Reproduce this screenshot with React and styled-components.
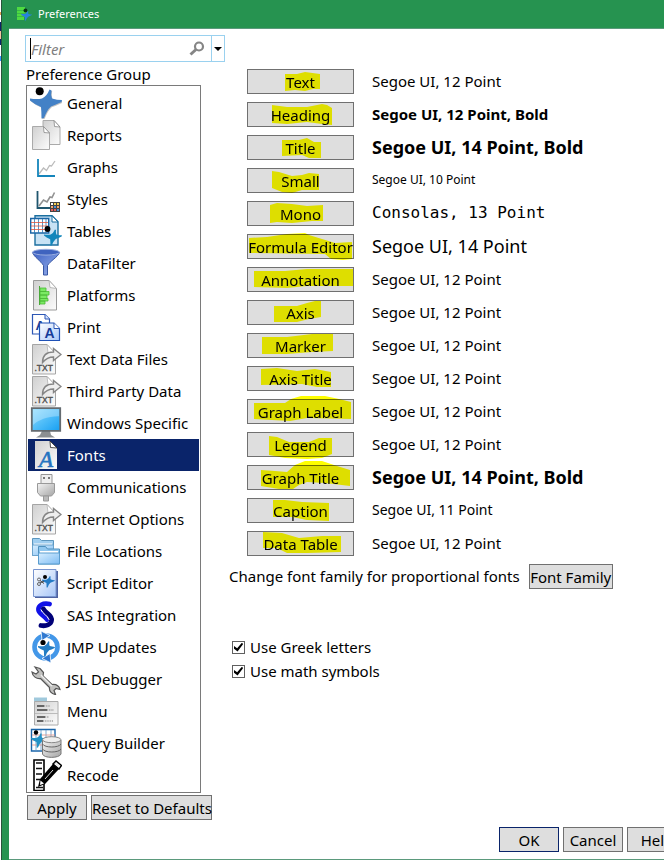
import React, { useState } from "react";
import styled, { createGlobalStyle } from "styled-components";

const TxtIcon = () => (
  <>
    <path d="M2.500 1.500H17l8.500 9V31h-23z" fill="url(#paper)" stroke="#a5a5a5" />
    <path d="M17 1.500l1 8 7.500 1z" fill="#fff" stroke="#aaa" strokeWidth=".7" />
    <path
      d="M12.500 19.500c0-7 4-10.500 11-10.500V5.500l7.500 6-7.500 6V14c-5 0-8 2-11 5.500z"
      fill="#eee"
      stroke="#858585"
      strokeWidth="1.400"
    />
    <text x="4.500" y="28" fontSize="8.500" fontFamily="Liberation Sans, sans-serif" fill="#555" stroke="#555" strokeWidth=".4">
      .TXT
    </text>
  </>
);

const MAN =
  "M0 11.500Q7 12.500 12 11.500Q17 9 19.500 2.500L21.500 3.500Q20.500 8 22 11.500Q27 13 32 13L31.500 15Q25 18 21 19.500Q17 23 14 31L11.500 31.500Q11.500 25 11 20Q4 17 0 13.500z";

const icons = {
  general: (
    <>
      <path d={MAN} transform="translate(.7 .8)" fill="#999" opacity=".6" />
      <path d={MAN} fill="#4381c6" />
      <circle cx="9.700" cy="4.200" r="4" fill="#000" />
    </>
  ),
  reports: (
    <>
      <path d="M13 1.500h11l6 6.500v17.500H13z" fill="url(#paper)" stroke="#aaa" />
      <path d="M24 1.500l.5 6 5.500.5z" fill="#fff" stroke="#888" strokeWidth=".8" />
      <path d="M2.500 7.500h11l6 6.500v16.500h-17z" fill="url(#paper)" stroke="#aaa" />
      <path d="M13.500 7.500l.5 6 5.500.5z" fill="#fff" stroke="#888" strokeWidth=".8" />
    </>
  ),
  graphs: (
    <>
      <path d="M9 23l4.500-6 3 2.500 3-5 2 .5 3.500-5" fill="none" stroke="#bbb" strokeWidth="1.300" />
      <path d="M8 8v17h17" fill="none" stroke="#1585bb" strokeWidth="1.800" />
    </>
  ),
  styles: (
    <>
      <path d="M9 23l4.500-6 3.500 2 3-5 2 .5 2.500-5" fill="none" stroke="#929292" strokeWidth="1.600" />
      <path d="M7.500 8v17H20" fill="none" stroke="#20566e" strokeWidth="1.800" />
      <path d="M20 19h10v10H20z" fill="#444" />
      <path d="M21 20h2v2h-2z" fill="#fff" />
      <path d="M24 20h2v2h-2zM27 20h2v2h-2z" fill="#f5cf54" />
      <path d="M21 23h2v2h-2zM27 23h2v2h-2z" fill="#f6a56d" />
      <path d="M24 23h2v2h-2zM27 26h2v2h-2z" fill="#4f94d8" />
      <path d="M21 26h2v2h-2zM24 26h2v2h-2z" fill="#e25c5c" />
    </>
  ),
  tables: (
    <>
      <path d="M5 .8h17l6 6V30H5z" fill="#c8e2f4" stroke="#1b6f9f" strokeWidth="1.400" />
      <path d="M22 .8V7h6z" fill="#fff" stroke="#1b6f9f" />
      <path d="M.7 3.500h18V18H.7z" fill="#fff" stroke="#1a65a5" strokeWidth="1.400" />
      <path d="M4.500 4v14M8.500 4v14M12.500 4v14M16 4v14" stroke="#2b78b5" strokeWidth=".8" />
      <path d="M1 7.500h17M1 11h17M1 14.500h17" stroke="#e0533b" strokeWidth=".8" />
      <path d={MAN} transform="translate(14 13) scale(.56)" fill="#1286bb" />
      <circle cx="17.500" cy="14" r="2.900" fill="#000" />
    </>
  ),
  filter: (
    <>
      <path d="M2.500 5.500C4 10 11 14 13.500 18.500V28h4v-9.500C20 14 28 10 29.500 5.500z" fill="url(#funnel)" stroke="#3857a4" />
      <ellipse cx="16" cy="5.200" rx="13.500" ry="2.900" fill="#3f63bf" stroke="#9aaedf" />
    </>
  ),
  platforms: (
    <>
      <path d="M3.500 1.500H19l7.500 8V31h-23z" fill="url(#paper)" stroke="#9a9a9a" />
      <path d="M19 1.500l1 7 6.500 1z" fill="#fff" stroke="#aaa" strokeWidth=".8" />
      <path d="M10 9h6v3.500h-6zM10 12.500h9V16h-9zM10 16h7v3.500h-7zM10 19.500h8V22h-8zM10 22h5v3h-5z" fill="#7bea64" stroke="#4cba38" strokeWidth=".8" />
      <path d="M9.500 7v19" stroke="#4aa93a" />
    </>
  ),
  print: (
    <>
      <path d="M2.500 3.500h12.500l4.500 4.500v15h-17z" fill="#fff" stroke="#2d57b5" strokeWidth="1.200" />
      <path d="M15 3.500V8h4.500" fill="#d6e4ff" stroke="#2d57b5" />
      <text x="5.500" y="19" fontSize="13" fontWeight="bold" fontFamily="Liberation Sans, sans-serif" fill="#1c3f93">A</text>
      <path d="M9.500 12H24l5.500 5.500v12h-20z" fill="url(#bluePaper)" stroke="#1f51b6" strokeWidth="1.200" />
      <path d="M24 12v5.500h5.500" fill="#fff" stroke="#2d57b5" />
      <text x="14.500" y="27" fontSize="14" fontWeight="bold" fontFamily="Liberation Sans, sans-serif" fill="#153b98">A</text>
    </>
  ),
  txt: <TxtIcon />,
  monitor: (
    <>
      <path d="M12 24h8l1 4 4 2.500H6l4-2.500z" fill="#8b8f92" />
      <path d="M1.800 1.200h28.400v22.600H1.800z" fill="url(#screen)" stroke="#646b70" strokeWidth="1.800" />
      <path d="M3 2.200h26v7C18 9 8 13 3 18z" fill="#fff" opacity=".3" />
    </>
  ),
  fonts: (
    <>
      <path d="M5 2h15l7 7v21H5z" fill="url(#paper)" />
      <path d="M20 2l.5 6.500L27 9z" fill="#fff" stroke="#222" strokeWidth=".8" />
      <text x="9" y="27.500" fontSize="23" fontStyle="italic" fontFamily="Liberation Serif, serif" fill="#2573c0" stroke="#2573c0" strokeWidth=".6">A</text>
    </>
  ),
  plug: (
    <>
      <path d="M11 3.500h11V13H11z" fill="#eee" stroke="#969696" />
      <path d="M13 6h2v2h-2zM18 6h2v2h-2z" fill="#777" />
      <path d="M7.500 12.500h17v9l-3 3.500h-11l-3-3.500z" fill="url(#metal)" stroke="#999" />
      <path d="M13.500 25h5v5h-5z" fill="#bbb" stroke="#999" />
    </>
  ),
  folders: (
    <>
      <path d="M2.500 3.500h7l2 2h12v15h-21z" fill="#9fcef0" stroke="#5c96be" />
      <path d="M4 8.500h18V11H4z" fill="#fff" />
      <path d="M2.500 10h21v10.500h-21z" fill="url(#folder)" stroke="#6ba3cc" />
      <path d="M8.500 11.500h7l2 2.500h12v15h-21z" fill="#90c7ef" stroke="#4f91be" />
      <path d="M10 16h18v2H10z" fill="#fff" />
      <path d="M8.500 18h21v11h-21z" fill="url(#folder)" stroke="#5b9dce" />
    </>
  ),
  script: (
    <>
      <path d="M26 4h2v27H5v-1h21z" fill="#4f63a1" />
      <path d="M3.500 2.500H26v27H3.500z" fill="url(#bluePaper)" stroke="#7895cf" />
      <path d={MAN} transform="translate(12 8) scale(.4)" fill="#247bc5" />
      <circle cx="15" cy="10" r="2" />
      <circle cx="9" cy="12.500" r="1.500" fill="none" stroke="#666" />
      <circle cx="9" cy="17" r="1.500" fill="none" stroke="#666" />
      <path d="M10 13.500l4 3M10 16l4-2" stroke="#444" />
    </>
  ),
  sas: (
    <g fill="none" strokeLinecap="round" strokeWidth="4.800">
      <path d="M19.500 5C13 3.500 8 6.500 8.500 11C9 15 14 16 17 20.500" stroke="#1111e8" />
      <path d="M13.500 10C16 15 22.500 16 21.500 21.500C21 25.500 16 27.500 11 26.500" stroke="#000078" />
      <path d="M11 11C12.500 14.500 17 16 19 20.500" stroke="#fff" strokeWidth="1" />
    </g>
  ),
  updates: (
    <>
      <circle cx="16" cy="16" r="11.500" fill="#fff" stroke="#4397e8" strokeWidth="4.600" />
      <path d="M11 0l9 4.500-8 5zM21 32l-9-4.500 8-5z" fill="#3079d0" stroke="#fff" strokeWidth=".8" />
      <path d={MAN} transform="translate(8 9) scale(.53)" fill="#237cc3" />
      <circle cx="13" cy="11.500" r="2.600" />
    </>
  ),
  wrench: (
    <>
      <path
        d="M5 4l5 1.500 3.500 4-.5 3.500 9 8.500c4-.5 7 1.500 8 5l-4-1-2 2 1.500 4c-4-.5-6.500-3.500-6-7l-9-9c-4 .5-8-2-8.500-6.500l4 2 2.500-2z"
        fill="#c2c2c0"
        stroke="#555"
        strokeWidth="1.200"
      />
      <path d="M11 12l11 11" stroke="#eee" strokeWidth="1.500" />
    </>
  ),
  menu: (
    <>
      <path d="M4 2.500h13V7H4z" fill="#a0c9dc" />
      <path d="M4.500 6.500h23.500V30H4.500z" fill="url(#paper)" stroke="#aaa" />
      <path d="M5 18.500h23" stroke="#bbb" />
      <path d="M7 11h7M7 15h10M7 22h8M7 26h6" stroke="#666" strokeWidth="1.800" />
      <path d="M14 11h6M17 15h7M15 22h4M13 26h11" stroke="#777" strokeWidth="1.200" strokeDasharray="1.200 1" />
    </>
  ),
  query: (
    <>
      <path d="M1.500 2.500H25V24H1.500z" fill="#fff" stroke="#1a65aa" strokeWidth="1.400" />
      <path d="M6 3v21M11 3v21M16 3v21M21 3v21" stroke="#5a94c6" strokeWidth=".8" />
      <path d="M2 8h23M2 13h23M2 18h23" stroke="#e19183" strokeWidth=".8" />
      <path d={MAN} transform="translate(1 5) scale(.5)" fill="#2292c6" />
      <circle cx="6" cy="5.500" r="2.200" />
      <path d="M12.500 13v14c1 4.500 17 4.500 18.500 0V13z" fill="url(#metal)" stroke="#777" />
      <path d="M12.500 17c2 4 16.500 4 18.500 0M12.500 22c2 4 16.500 4 18.500 0" fill="none" stroke="#666" />
      <ellipse cx="21.700" cy="12.700" rx="9.200" ry="3" fill="#eee" stroke="#888" />
    </>
  ),
  recode: (
    <>
      <path d="M4 1h10v30.500H4z" fill="#fff" stroke="#000" strokeWidth="1.600" />
      <path d="M6 4h6M6 9.500h6M6 15h6M6 20.500h4M6 28.500h7" stroke="#111" strokeWidth="1.500" />
      <path d="M8 28l2-8L23 5l6 5-14 15z" fill="#000" />
      <path d="M23 5l3-3 5.500 4.500L29 10z" fill="#fff" stroke="#000" strokeWidth="1.500" />
      <path d="M10.500 21.500l3.500 3-4 1.500z" fill="#fff" />
      <path d="M25 4l5 4M15 20l8-9" stroke="#ddd" strokeWidth="1" />
    </>
  ),
};

const groups = [
  ["General", "general"],
  ["Reports", "reports"],
  ["Graphs", "graphs"],
  ["Styles", "styles"],
  ["Tables", "tables"],
  ["DataFilter", "filter"],
  ["Platforms", "platforms"],
  ["Print", "print"],
  ["Text Data Files", "txt"],
  ["Third Party Data", "txt"],
  ["Windows Specific", "monitor"],
  ["Fonts", "fonts"],
  ["Communications", "plug"],
  ["Internet Options", "txt"],
  ["File Locations", "folders"],
  ["Script Editor", "script"],
  ["SAS Integration", "sas"],
  ["JMP Updates", "updates"],
  ["JSL Debugger", "wrench"],
  ["Menu", "menu"],
  ["Query Builder", "query"],
  ["Recode", "recode"],
];

// mark: marker-pen stroke over the button, in the button's own pixels
const fonts = [
  { name: "Text", value: "Segoe UI, 12 Point", mark: "M38 5L50 5 58 3 73 5V20H66L58 22 48 21 38 22z" },
  { name: "Heading", value: "Segoe UI, 12 Point, Bold", bold: true, mark: "M25 3L40 5 60 5 75 2 80 3 85 6V23L75 22 60 20 40 22 25 21z" },
  { name: "Title", value: "Segoe UI, 14 Point, Bold", size: 18, bold: true, mark: "M35 5L52 5 60 3 67 7 74 7V23H62L55 20 35 21z" },
  { name: "Small", value: "Segoe UI, 10 Point", size: 12, mark: "M25 3L32 4 45 8 55 7 62 5 72 6V22H55L45 25 35 24 25 20z" },
  { name: "Mono", value: "Consolas, 13 Point", size: 16, mono: true, mark: "M23 4L30 2 45 3 60 5 76 4V20L65 20 45 22 30 21 23 22z" },
  { name: "Formula Editor", value: "Segoe UI, 14 Point", size: 18, mark: "M2 4L20 3 40 0 58 -1 62 1 75 5 88 9 105 8V25L96 26 84 25 78 20 2 19z" },
  { name: "Annotation", value: "Segoe UI, 12 Point", mark: "M7 4L38 4 60 2H106V19L60 19 40 21 7 20z" },
  { name: "Axis", value: "Segoe UI, 12 Point", mark: "M27 6L50 6 60 3 68 1H74V17L62 19 50 22H27z" },
  { name: "Marker", value: "Segoe UI, 12 Point", mark: "M15 4L40 4 65 1H86V18L65 19 40 21H15z" },
  { name: "Axis Title", value: "Segoe UI, 12 Point", mark: "M14 3L30 2 50 5 68 3 84 6V21H70L55 18 14 19z" },
  { name: "Graph Label", value: "Segoe UI, 12 Point", mark: "M7 4L38 4 44 0 54 -3 78 -3 92 0 104 3V20L60 19 43 22 7 20z" },
  { name: "Legend", value: "Segoe UI, 12 Point", mark: "M22 4L30 5 42 10 62 10 72 6H85V22L75 26 60 27 38 26 22 23z" },
  { name: "Graph Title", value: "Segoe UI, 14 Point, Bold", size: 18, bold: true, mark: "M14 5L28 6 40 7 48 0 58 -4 75 -4 90 1 103 5V21L78 18 60 17 52 20 46 24 32 24 14 21z" },
  { name: "Caption", value: "Segoe UI, 11 Point", size: 14, mark: "M26 2L38 2 55 4 82 5V23L60 22 45 19H26z" },
  { name: "Data Table", value: "Segoe UI, 12 Point", mark: "M16 1L35 2 52 7 75 5H94V21L60 22 40 22 30 17 16 17z" },
];

const Gradient = ({ id, from, to }) => (
  <linearGradient id={id} x1="0" y1="0" x2="1" y2="1">
    <stop offset="0" stopColor={from} />
    <stop offset="1" stopColor={to} />
  </linearGradient>
);

const App = () => {
  const [selected, setSelected] = useState("Fonts");

  return (
    <Desktop>
      <GlobalStyle />
      <Defs aria-hidden="true">
        <defs>
          <Gradient id="paper" from="#d0d0d0" to="#fcfcfc" />
          <Gradient id="bluePaper" from="#ffffff" to="#a7c6f7" />
          <Gradient id="funnel" from="#3c60c3" to="#9db6ef" />
          <Gradient id="screen" from="#8bdcff" to="#169ff2" />
          <Gradient id="metal" from="#f4f4f4" to="#a5a5a5" />
          <Gradient id="folder" from="#d9efff" to="#7dbcf3" />
        </defs>
      </Defs>
      <Window>
        <TitleBar>
          <svg width="16" height="16" viewBox="0 0 16 16" aria-hidden="true">
            <path d="M1 1h8v3H1zM1 4.500h11v3H1zM1 8h8v2.500H1zM1 11h7v3H1z" fill="#4edb41" />
            <path d={MAN} transform="translate(5 4) scale(.34)" fill="#2684dc" />
            <circle cx="9.500" cy="4.500" r="2" fill="#073416" />
          </svg>
          <WindowTitle>Preferences</WindowTitle>
        </TitleBar>
        <Dialog>
          <Columns>
            <Sidebar>
              <FilterBox>
                <Caret />
                <FilterInput placeholder="Filter" aria-label="Filter" />
                <svg width="16" height="16" viewBox="0 0 16 16" aria-hidden="true">
                  <circle cx="10" cy="5.500" r="4" fill="none" stroke="#858585" strokeWidth="2.200" />
                  <path d="M7 8.500l-5.500 5" stroke="#858585" strokeWidth="3" />
                </svg>
                <FilterMenu aria-label="Filter options">
                  <svg width="8" height="4" viewBox="0 0 8 4" aria-hidden="true">
                    <path d="M0 0h8L4 4z" />
                  </svg>
                </FilterMenu>
              </FilterBox>
              <GroupLabel>Preference Group</GroupLabel>
              <GroupList>
                {groups.map(([name, icon]) => (
                  <li key={name}>
                    <GroupItem $active={selected === name} onClick={() => setSelected(name)}>
                      <svg width="32" height="32" viewBox="0 0 32 32" aria-hidden="true">
                        {icons[icon]}
                      </svg>
                      {name}
                    </GroupItem>
                  </li>
                ))}
              </GroupList>
              <SidebarButtons>
                <Button $width={60}>Apply</Button>
                <Button $width={121}>Reset to Defaults</Button>
              </SidebarButtons>
            </Sidebar>
            <Panel>
              <FontRows>
                {fonts.map((font) => (
                  <FontRow key={font.name}>
                    <ButtonWrap>
                      <Button $width={107}>{font.name}</Button>
                      <Mark viewBox="0 -5 107 35" aria-hidden="true">
                        <path d={font.mark} fill="#ff0" />
                      </Mark>
                    </ButtonWrap>
                    <FontValue $size={font.size} $bold={font.bold} $mono={font.mono}>
                      {font.value}
                    </FontValue>
                  </FontRow>
                ))}
              </FontRows>
              <FamilyRow>
                <FamilyText>Change font family for proportional fonts</FamilyText>
                <Button $width={84}>Font Family</Button>
              </FamilyRow>
              <Options>
                <Option>
                  <Checkbox type="checkbox" defaultChecked />
                  Use Greek letters
                </Option>
                <Option>
                  <Checkbox type="checkbox" defaultChecked />
                  Use math symbols
                </Option>
              </Options>
            </Panel>
          </Columns>
          <Footer>
            <Button $width={60} $primary>OK</Button>
            <Button $width={60}>Cancel</Button>
            <Button $width={60}>Help</Button>
          </Footer>
        </Dialog>
      </Window>
    </Desktop>
  );
};

export default App;

const GlobalStyle = createGlobalStyle`
  * {
    box-sizing: border-box;
  }
  body {
    margin: 0;
    overflow: hidden;
    font: 15px/20px "Noto Sans", "Open Sans", sans-serif;
    color: #000;
  }
  svg {
    display: block;
    flex: none;
  }
`;

const Defs = styled.svg`
  position: absolute;
  width: 0;
  height: 0;
`;

const Desktop = styled.div`
  min-height: 100vh;
  padding-left: 1px;
  overflow: hidden;
  background: linear-gradient(
    #fff 12px, #e4a053 12px 15px, #fff 15px 22px, #0a246a 22px 31px,
    #f3c5a0 31px 39px, #0a246a 39px 45px, #fff 45px 56px, #3399ff 56px 61px, #fff 61px
  );
`;

const Window = styled.div`
  min-height: 100vh;
  display: flex;
  flex-direction: column;
  border-left: 1px solid #28543a;
  padding-left: 7px;
  background: #269350;
`;

const TitleBar = styled.header`
  display: flex;
  align-items: center;
  gap: 6px;
  height: 28px;
  padding-left: 7px;
`;

const WindowTitle = styled.h1`
  margin: 0;
  font-size: 11px;
  font-weight: normal;
  color: #fff;
`;

const Dialog = styled.main`
  flex: 1;
  padding: 6px 0 6px 16px;
  border-top: 1px solid #5b9a7c;
  border-bottom: 1px solid #5b9a7c;
  background: #fff;
`;

const Columns = styled.div`
  display: flex;
  align-items: flex-start;
`;

const Sidebar = styled.aside`
  flex: none;
  width: 200px;
`;

const FilterBox = styled.div`
  display: flex;
  align-items: center;
  height: 27px;
  padding-left: 4px;
  border: 1px solid #9ad1ef;
`;

const Caret = styled.span`
  width: 1px;
  height: 21px;
  background: #000;
`;

const FilterInput = styled.input`
  flex: 1;
  min-width: 0;
  padding: 0;
  border: 0;
  outline: 0;
  background: none;
  font: inherit;

  &::placeholder {
    color: #808080;
    font-style: italic;
    opacity: 1;
  }
`;

const FilterMenu = styled.button`
  display: grid;
  place-items: center;
  align-self: stretch;
  width: 13px;
  margin-left: 6px;
  padding: 0;
  border: 0;
  border-left: 1px solid #9ad1ef;
  background: none;
`;

const GroupLabel = styled.h2`
  margin: 2px 0 1px 1px;
  font-size: 15px;
  font-weight: normal;
`;

const GroupList = styled.ul`
  width: 175px;
  margin: 0 0 0 1px;
  padding: 1px;
  border: 1px solid #7a7a7a;
  list-style: none;
`;

const GroupItem = styled.button`
  display: flex;
  align-items: center;
  gap: 5px;
  width: 100%;
  height: 32px;
  padding: 0 0 0 2px;
  border: 0;
  background: ${({ $active }) => ($active ? "#0a246a" : "none")};
  color: ${({ $active }) => ($active ? "#fff" : "#000")};
  font: inherit;
  white-space: nowrap;
`;

const Button = styled.button`
  flex: none;
  width: ${({ $width }) => $width}px;
  height: 25px;
  padding: 0;
  border: 1px solid ${({ $primary }) => ($primary ? "#0a246a" : "#707070")};
  background: #dedede;
  color: #000;
  font: inherit;
  white-space: nowrap;
`;

const SidebarButtons = styled.div`
  display: flex;
  gap: 4px;
  margin: 2px 0 0 2px;
`;

const Panel = styled.section`
  flex: 1;
  min-width: 0;
  padding: 34px 0 0 4px;
`;

const FontRows = styled.div`
  display: grid;
  gap: 8px;
  padding-left: 18px;
`;

const FontRow = styled.div`
  display: flex;
  align-items: center;
  gap: 18px;
  height: 25px;
`;

const ButtonWrap = styled.div`
  position: relative;
  isolation: isolate;
  background: #fff;
`;

const Mark = styled.svg`
  position: absolute;
  left: 0;
  top: -5px;
  width: 107px;
  height: 35px;
  mix-blend-mode: multiply;
  pointer-events: none;
`;

const FontValue = styled.span`
  padding-bottom: 1px;
  font-family: ${({ $mono }) => ($mono ? '"DejaVu Sans Mono", monospace' : "inherit")};
  font-size: ${({ $size = 15 }) => $size}px;
  font-weight: ${({ $bold }) => ($bold ? "bold" : "normal")};
  white-space: nowrap;
`;

const FamilyRow = styled.div`
  display: flex;
  align-items: center;
  gap: 9px;
  margin-top: 8px;
  white-space: nowrap;
`;

const FamilyText = styled.span`
  padding-bottom: 1px;
`;

const Options = styled.div`
  display: grid;
  gap: 4px;
  margin-top: 48px;
  padding-left: 3px;
`;

const Option = styled.label`
  display: flex;
  align-items: center;
  gap: 5px;
`;

const Checkbox = styled.input`
  appearance: none;
  display: grid;
  place-items: center;
  width: 13px;
  height: 13px;
  margin: 0;
  border: 1px solid #606060;
  background: #fff;

  &:checked::before {
    content: "";
    width: 9px;
    height: 9px;
    background: #000;
    clip-path: polygon(0 40%, 35% 65%, 90% 0, 100% 20%, 40% 100%, 0 70%);
  }
`;

/* Help runs past the right edge of the window */
const Footer = styled.footer`
  display: flex;
  justify-content: flex-end;
  gap: 4px;
  margin: 7px -23px 0 0;
`;
